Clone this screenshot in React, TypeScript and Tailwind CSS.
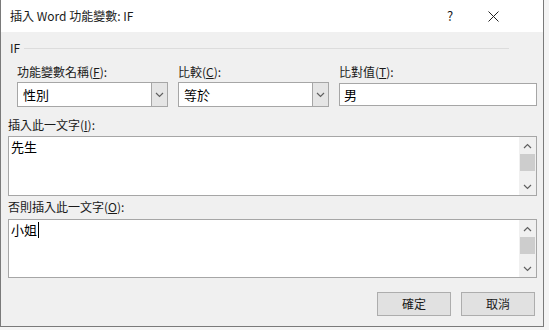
import React from "react";

const font = { fontFamily: '"Noto Sans CJK TC", "Noto Sans", sans-serif' };

const Chevron = ({ up = false, className = "" }: { up?: boolean; className?: string }) => (
  <svg width="9" height="6" viewBox="0 0 9 6" className={className}>
    <path
      d={up ? "M1 5 L4.5 1.5 L8 5" : "M1 1 L4.5 4.5 L8 1"}
      fill="none"
      stroke="currentColor"
      strokeWidth="1.2"
    />
  </svg>
);

const Label = ({ text, acc, after = "):" }: { text: string; acc: string; after?: string }) => (
  <div className="h-[16px] leading-[16px] text-[12px] text-[#1a1a1a]">
    {text}(<u>{acc}</u>
    {after}
  </div>
);

const Combo = ({ value }: { value: string }) => (
  <div className="flex h-[25px] border border-[#a6a6a6] bg-white">
    <div className="flex-1 pl-[5px] text-[13px] leading-[23px] text-black">{value}</div>
    <div className="flex w-[16px] items-center justify-center border-l border-[#a6a6a6] bg-[#e5e5e5] text-[#606060]">
      <Chevron />
    </div>
  </div>
);

const TextArea = ({ value, caret = false, height }: { value: string; caret?: boolean; height: string }) => (
  <div className={`flex ${height} border border-[#a6a6a6] bg-white`}>
    <div className="flex flex-1 items-start pl-[2px] pt-[1px] text-[13px] leading-[18px] text-black">
      {value}
      {caret && <span className="ml-[1px] mt-[1px] inline-block h-[16px] w-[1px] bg-black" />}
    </div>
    <div className="flex w-[17px] flex-col bg-[#f0f0f0] text-[#606060]">
      <div className="flex h-[17px] items-center justify-center">
        <Chevron up />
      </div>
      <div className="mx-[1px] h-[17px] bg-[#cdcdcd]" />
      <div className="flex-1" />
      <div className="flex h-[17px] items-center justify-center">
        <Chevron />
      </div>
    </div>
  </div>
);

const Button = ({ text }: { text: string }) => (
  <button className="h-[24px] w-[74px] border border-[#adadad] bg-[#e1e1e1] text-[12px] text-[#1a1a1a]">
    {text}
  </button>
);

export default function App() {
  return (
    <div className="h-[330px] w-[549px] bg-[#f4f4f4]" style={font}>
      <div className="flex h-[327px] w-[544px] flex-col border-x border-b border-[#7a7a7a] bg-[#f0f0f0]">
        {/* title bar */}
        <div className="flex h-[32px] items-center bg-white pl-[9px] text-[12px] text-[#1a1a1a]">
          <div className="flex-1">插入 Word 功能變數: IF</div>
          <div className="w-[20px] text-center text-[13px]">?</div>
          <div className="ml-[27px] mr-[44px] flex w-[12px] justify-center">
            <svg width="11" height="11" viewBox="0 0 11 11">
              <path d="M0.5 0.5 L10.5 10.5 M10.5 0.5 L0.5 10.5" stroke="#222" strokeWidth="1" />
            </svg>
          </div>
        </div>

        <div className="flex flex-col px-[7px]">
          {/* group header */}
          <div className="mt-[8px] flex h-[16px] items-center pl-[2px]">
            <span className="text-[12px] text-[#1a1a1a]">IF</span>
            <div className="ml-[4px] mr-[27px] h-px flex-1 bg-[#dcdcdc]" />
          </div>

          <div className="mt-[8px] grid grid-cols-[151px_151px_198px] gap-x-[10px] pl-[9px]">
            <div>
              <Label text="功能變數名稱" acc="F" />
              <div className="mt-[2px]">
                <Combo value="性別" />
              </div>
            </div>
            <div>
              <Label text="比較" acc="C" />
              <div className="mt-[2px]">
                <Combo value="等於" />
              </div>
            </div>
            <div>
              <Label text="比對值" acc="T" />
              <div className="mt-[3px] h-[23px] border border-[#a6a6a6] bg-white pl-[4px] text-[13px] leading-[21px] text-black">
                男
              </div>
            </div>
          </div>

          <div className="mt-[10px]">
            <Label text="插入此一文字" acc="I" />
          </div>
          <div className="mt-[3px] w-[529px]">
            <TextArea value="先生" height="h-[60px]" />
          </div>

          <div className="mt-[3px]">
            <Label text="否則插入此一文字" acc="O" />
          </div>
          <div className="mt-[4px] w-[529px]">
            <TextArea value="小姐" caret height="h-[59px]" />
          </div>

          <div className="mt-[14px] flex w-[527px] justify-end gap-[10px]">
            <Button text="確定" />
            <Button text="取消" />
          </div>
        </div>
      </div>
    </div>
  );
}
